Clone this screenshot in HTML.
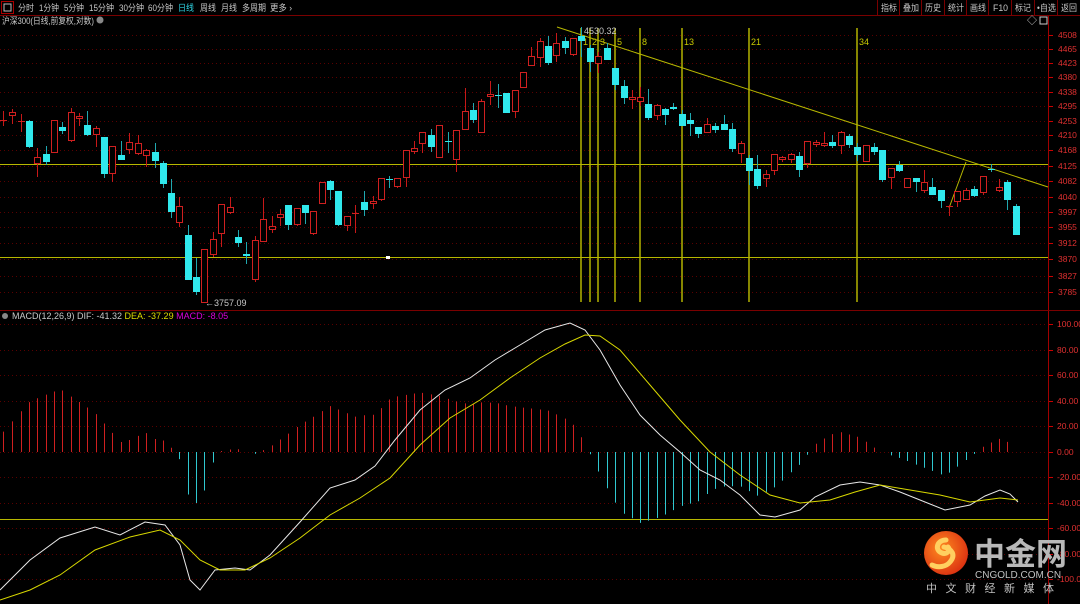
<!DOCTYPE html>
<html><head><meta charset="utf-8"><style>
body{margin:0;background:#000;width:1080px;height:604px;overflow:hidden;font-family:"Liberation Sans","Noto Sans CJK SC",sans-serif;}
svg{position:absolute;left:0;top:0}
.t{font-family:"Liberation Sans","Noto Sans CJK SC",sans-serif}
</style></head><body>
<svg id="s" width="1080" height="604" xmlns="http://www.w3.org/2000/svg">
<rect width="1080" height="604" fill="#000"/>
<g id="g"></g>
<rect x="0" y="0" width="1080" height="15" fill="#000"/>
<line x1="0" y1="15.5" x2="1080" y2="15.5" stroke="#7a0000"/>
<rect x="1.5" y="1.5" width="12" height="12" fill="none" stroke="#aa0000"/>
<rect x="4" y="4" width="7" height="7" fill="none" stroke="#bbb"/>
<g class="t" font-size="9" fill="#c8c8c8" lengthAdjust="spacingAndGlyphs">
<text x="18" y="11" textLength="16" lengthAdjust="spacingAndGlyphs">分时</text>
<text x="39" y="11" textLength="20" lengthAdjust="spacingAndGlyphs">1分钟</text>
<text x="64" y="11" textLength="20" lengthAdjust="spacingAndGlyphs">5分钟</text>
<text x="89" y="11" textLength="25" lengthAdjust="spacingAndGlyphs">15分钟</text>
<text x="119" y="11" textLength="25" lengthAdjust="spacingAndGlyphs">30分钟</text>
<text x="148" y="11" textLength="25" lengthAdjust="spacingAndGlyphs">60分钟</text>
<text x="178" y="11" textLength="16" lengthAdjust="spacingAndGlyphs" fill="#30d8e8">日线</text>
<text x="200" y="11" textLength="16" lengthAdjust="spacingAndGlyphs">周线</text>
<text x="221" y="11" textLength="16" lengthAdjust="spacingAndGlyphs">月线</text>
<text x="242" y="11" textLength="24" lengthAdjust="spacingAndGlyphs">多周期</text>
<text x="270" y="11" textLength="22" lengthAdjust="spacingAndGlyphs">更多 ›</text>
</g>
<g class="t" font-size="9" fill="#c8c8c8">
<text x="881" y="11" textLength="16" lengthAdjust="spacingAndGlyphs">指标</text><text x="903" y="11" textLength="16" lengthAdjust="spacingAndGlyphs">叠加</text><text x="925" y="11" textLength="16" lengthAdjust="spacingAndGlyphs">历史</text><text x="948" y="11" textLength="16" lengthAdjust="spacingAndGlyphs">统计</text><text x="970" y="11" textLength="16" lengthAdjust="spacingAndGlyphs">画线</text><text x="993" y="11" textLength="15" lengthAdjust="spacingAndGlyphs">F10</text><text x="1015" y="11" textLength="16" lengthAdjust="spacingAndGlyphs">标记</text><text x="1037" y="11" textLength="19" lengthAdjust="spacingAndGlyphs">•自选</text><text x="1061" y="11" textLength="16" lengthAdjust="spacingAndGlyphs">返回</text>
</g>
<g stroke="#7a0000"><line x1="877.5" y1="0" x2="877.5" y2="15"/><line x1="899.5" y1="0" x2="899.5" y2="15"/><line x1="921.5" y1="0" x2="921.5" y2="15"/><line x1="944.5" y1="0" x2="944.5" y2="15"/><line x1="966.5" y1="0" x2="966.5" y2="15"/><line x1="988.5" y1="0" x2="988.5" y2="15"/><line x1="1011.5" y1="0" x2="1011.5" y2="15"/><line x1="1034.5" y1="0" x2="1034.5" y2="15"/><line x1="1057.5" y1="0" x2="1057.5" y2="15"/></g>
<text x="2" y="24" class="t" font-size="9" fill="#c8c8c8" textLength="92" lengthAdjust="spacingAndGlyphs">沪深300(日线,前复权,对数)</text>
<circle cx="100" cy="20" r="3.5" fill="#888"/>
<text x="1027" y="24" font-size="10" fill="#ccc">◇</text>
<rect x="1040" y="17" width="7" height="7" fill="none" stroke="#ccc"/>
<text x="12" y="319" class="t" font-size="9" fill="#c8c8c8"><tspan>MACD(12,26,9) DIF: -41.32 </tspan><tspan fill="#dddd00">DEA: -37.29 </tspan><tspan fill="#dd00dd">MACD: -8.05</tspan></text>
<circle cx="5" cy="316" r="3" fill="#888"/>
<defs><radialGradient id="lg" cx="0.4" cy="0.4" r="0.7"><stop offset="0" stop-color="#ff8a20"/><stop offset="1" stop-color="#d82a10"/></radialGradient></defs>
<circle cx="946" cy="553" r="22" fill="url(#lg)"/>
<path d="M946 540 c-9 0 -12 10 -4 13 c5 2 9 -3 6 -6 M944 547 c8 2 12 8 6 15 c-4 5 -12 6 -18 3" fill="none" stroke="#ffd060" stroke-width="5" stroke-linecap="round"/>
<text x="974" y="565" class="t" font-size="31" font-weight="bold" fill="#b8b8b8">中金网</text>
<text x="975" y="578" font-size="10" fill="#c0c0c0" font-family="Liberation Sans">CNGOLD.COM.CN</text>
<text x="926" y="592" class="t" font-size="11" fill="#c0c0c0" letter-spacing="8.5">中文财经新媒体</text>
</svg>
<script>
const g=document.getElementById('g');let h='';
const P=[[4508,35],[4465,49],[4423,63],[4380,77],[4338,92],[4295,106],[4253,121],[4210,135],[4168,150],[4125,166],[4082,181],[4040,197],[3997,212],[3955,227],[3912,243],[3870,259],[3827,276],[3785,292]];
P.forEach(([v,y])=>{h+=`<line x1="0" y1="${y}.5" x2="1048" y2="${y}.5" stroke="#5a0000" stroke-dasharray="1,3"/><line x1="1048" y1="${y}.5" x2="1053" y2="${y}.5" stroke="#c00"/><text x="1058" y="${y+3}" font-size="8.5" fill="#e03030" font-family="Liberation Sans">${v}</text>`});
for(let i=0;i<11;i++){let v=100-20*i,y=Math.round(324+25.5*i);h+=`<line x1="0" y1="${y}.5" x2="1048" y2="${y}.5" stroke="#5a0000" stroke-dasharray="1,3"/><line x1="1048" y1="${y}.5" x2="1053" y2="${y}.5" stroke="#c00"/><text x="1057" y="${y+3}" font-size="8.5" fill="#e03030" font-family="Liberation Sans">${v.toFixed(2)}</text>`}
h+=`<line x1="1048.5" y1="16" x2="1048.5" y2="604" stroke="#a00000"/><line x1="0" y1="310.5" x2="1080" y2="310.5" stroke="#7a0000"/>`;
[[581,'1'],[590,'2'],[598,'3'],[615,'5'],[640,'8'],[682,'13'],[749,'21'],[857,'34']].forEach(([x,l])=>{h+=`<line x1="${x}" y1="28" x2="${x}" y2="302" stroke="#a8a800" stroke-width="1.6"/><text x="${x+2}" y="45" font-size="9" fill="#c8c800" font-family="Liberation Sans">${l}</text>`});
h+=`<line x1="0" y1="164.5" x2="1048" y2="164.5" stroke="#b8b800"/><line x1="0" y1="257.5" x2="1048" y2="257.5" stroke="#b8b800"/><line x1="0" y1="519.5" x2="1048" y2="519.5" stroke="#b8b800"/>`;
h+=`<line x1="557" y1="27" x2="1048" y2="187" stroke="#b8b800"/><line x1="949" y1="208" x2="966" y2="162" stroke="#b8b800"/>`;
h+=`<rect x="386" y="256" width="4" height="3" fill="#fff"/>`;
h+=`<text x="584" y="34" font-size="9" fill="#c8c8c8" font-family="Liberation Sans">4530.32</text><text x="205" y="306" font-size="9" fill="#c8c8c8" font-family="Liberation Sans">←3757.09</text>`;
const C=[[3,1,120,121,111,126],[12,1,112,115,109,124],[21,1,121,122,114,132],[29,0,121,147,120,148],[37,1,157,163,148,177],[46,0,154,162,146,165],[54,1,120,152,120,152],[62,0,127,131,122,134],[71,1,112,140,108,142],[79,1,116,118,113,126],[87,0,125,135,111,136],[96,1,128,134,126,147],[104,0,137,174,137,178],[112,1,146,173,146,182],[121,0,155,160,141,160],[129,1,142,149,133,154],[138,1,143,153,135,155],[146,1,150,155,149,167],[155,0,152,161,143,168],[163,0,163,184,161,188],[171,0,193,212,179,218],[179,1,206,222,197,227],[188,0,235,280,225,280],[196,0,277,292,258,295],[204,1,249,302,249,302],[213,1,239,254,232,257],[221,1,204,233,204,247],[230,1,207,212,197,214],[238,0,237,243,230,247],[246,0,254,256,242,264],[255,1,240,279,236,282],[263,1,219,241,198,241],[272,1,226,229,216,233],[280,1,214,217,209,226],[288,0,205,225,205,230],[297,1,208,224,208,226],[305,0,205,213,205,224],[313,1,211,233,211,235],[322,1,182,203,182,204],[330,0,181,190,180,200],[338,0,191,225,191,226],[347,1,216,225,216,231],[355,1,213,214,205,233],[364,0,202,210,191,216],[373,1,201,203,196,209],[381,1,178,199,178,201],[389,0,179,180,176,188],[397,1,178,186,178,188],[406,1,150,177,150,187],[414,1,148,151,141,154],[422,1,132,143,132,153],[431,0,135,147,129,152],[439,1,125,157,125,157],[448,0,141,142,132,153],[456,1,130,159,130,172],[465,1,111,129,88,129],[473,0,110,120,103,123],[481,1,101,132,99,132],[490,1,94,96,81,105],[498,0,95,96,84,108],[506,0,93,113,93,113],[515,1,90,111,90,118],[523,1,72,87,72,88],[531,1,56,65,47,65],[540,1,41,57,38,67],[548,0,46,63,36,65],[556,1,43,55,33,62],[565,0,41,48,37,54],[573,1,38,54,38,56],[581,0,36,41,27,57],[590,0,48,62,45,72],[598,1,56,63,52,73],[607,0,48,60,43,60],[615,0,68,85,68,90],[624,0,86,98,80,104],[632,1,97,99,90,109],[640,1,97,101,87,106],[648,0,104,118,89,120],[657,1,105,115,104,120],[665,0,109,115,108,125],[673,0,107,109,103,110],[682,0,114,126,110,126],[690,0,120,124,113,136],[698,0,127,134,127,138],[707,1,124,132,118,133],[715,0,126,130,123,133],[724,0,124,130,115,130],[732,0,129,149,123,152],[741,1,143,153,141,163],[749,0,158,171,155,185],[757,0,169,186,155,189],[766,1,174,178,170,187],[774,1,154,170,154,175],[782,1,157,159,156,162],[791,1,154,159,153,163],[799,0,156,170,152,177],[807,1,141,163,141,168],[816,1,142,144,140,147],[824,1,143,145,132,147],[832,0,142,146,135,148],[841,1,132,145,131,154],[849,0,136,145,134,148],[857,0,147,155,143,161],[866,1,145,161,145,161],[874,0,147,152,143,155],[882,0,150,180,150,182],[891,1,168,177,168,189],[899,0,165,171,161,172],[907,1,178,187,178,188],[916,0,178,182,178,192],[924,1,182,190,170,193],[932,0,187,195,178,195],[941,0,190,201,190,208],[949,1,206,207,205,216],[957,1,191,201,191,207],[966,1,190,199,188,199],[974,0,189,196,186,197],[983,1,176,192,176,195],[991,0,169,170,164,172],[999,1,187,190,179,192],[1007,0,182,200,180,210],[1016,0,206,235,204,235]];
C.forEach(([x,u,t,b,wt,wb])=>{const col=u?'#d02020':'#30e8ec';h+=`<line x1="${x}.5" y1="${wt}" x2="${x}.5" y2="${wb}" stroke="${u?'#c81818':'#20a8b0'}"/>`;
if(b-t<2){h+=`<line x1="${x-3}" y1="${t}.5" x2="${x+4}" y2="${t}.5" stroke="${col}"/>`}
else if(u)h+=`<rect x="${x-2.5}" y="${t+.5}" width="6" height="${b-t}" fill="#000" stroke="${col}"/>`;else h+=`<rect x="${x-3}" y="${t}" width="7" height="${b-t}" fill="${col}"/>`;});
const D=[[0,590],[30,560],[60,538],[95,527],[120,535],[145,522],[165,525],[180,545],[190,580],[200,590],[215,570],[235,568],[250,570],[270,555],[300,522],[330,488],[355,480],[375,466],[395,440],[420,410],[445,390],[470,378],[495,360],[520,345],[545,330],[570,323],[585,330],[600,350],[620,385],[640,415],[660,435],[680,452],[700,470],[720,480],[740,495],[760,515],[775,517],[800,510],[815,497],[840,485],[860,482],[880,485],[900,492],[925,502],[945,510],[970,505],[985,496],[1000,490],[1010,494],[1018,502]];
const E=[[0,600],[30,590],[60,575],[95,550],[130,537],[160,530],[180,540],[200,560],[220,570],[245,570],[270,558],[300,538],[330,515],[360,498],[390,478],[420,445],[450,418],[480,400],[510,378],[540,358],[565,344],[585,335],[600,336],[620,350],[650,385],[680,420],[710,452],[740,475],[770,495],[800,503],[830,500],[855,492],[880,485],[910,490],[940,495],[970,502],[1000,498],[1018,500]];
const I=(A,x)=>{for(let i=1;i<A.length;i++)if(x<=A[i][0]){const a=A[i-1],b=A[i];return a[1]+(b[1]-a[1])*(x-a[0])/(b[0]-a[0])}return A[A.length-1][1]};
C.forEach(([x])=>{let d=(I(E,x)-I(D,x))*1.7;if(Math.abs(d)<1)return;d=Math.max(-78,Math.min(80,d));const u=d>0;h+=`<line x1="${x}.5" y1="452" x2="${x}.5" y2="${452-d}" stroke="${u?'#d02020':'#30c8d0'}"/>`});
h+=`<polyline points="${D.map(p=>p.join(',')).join(' ')}" fill="none" stroke="#e8e8e8"/><polyline points="${E.map(p=>p.join(',')).join(' ')}" fill="none" stroke="#d8d800"/>`;
g.innerHTML=h;
</script>
</body></html>
